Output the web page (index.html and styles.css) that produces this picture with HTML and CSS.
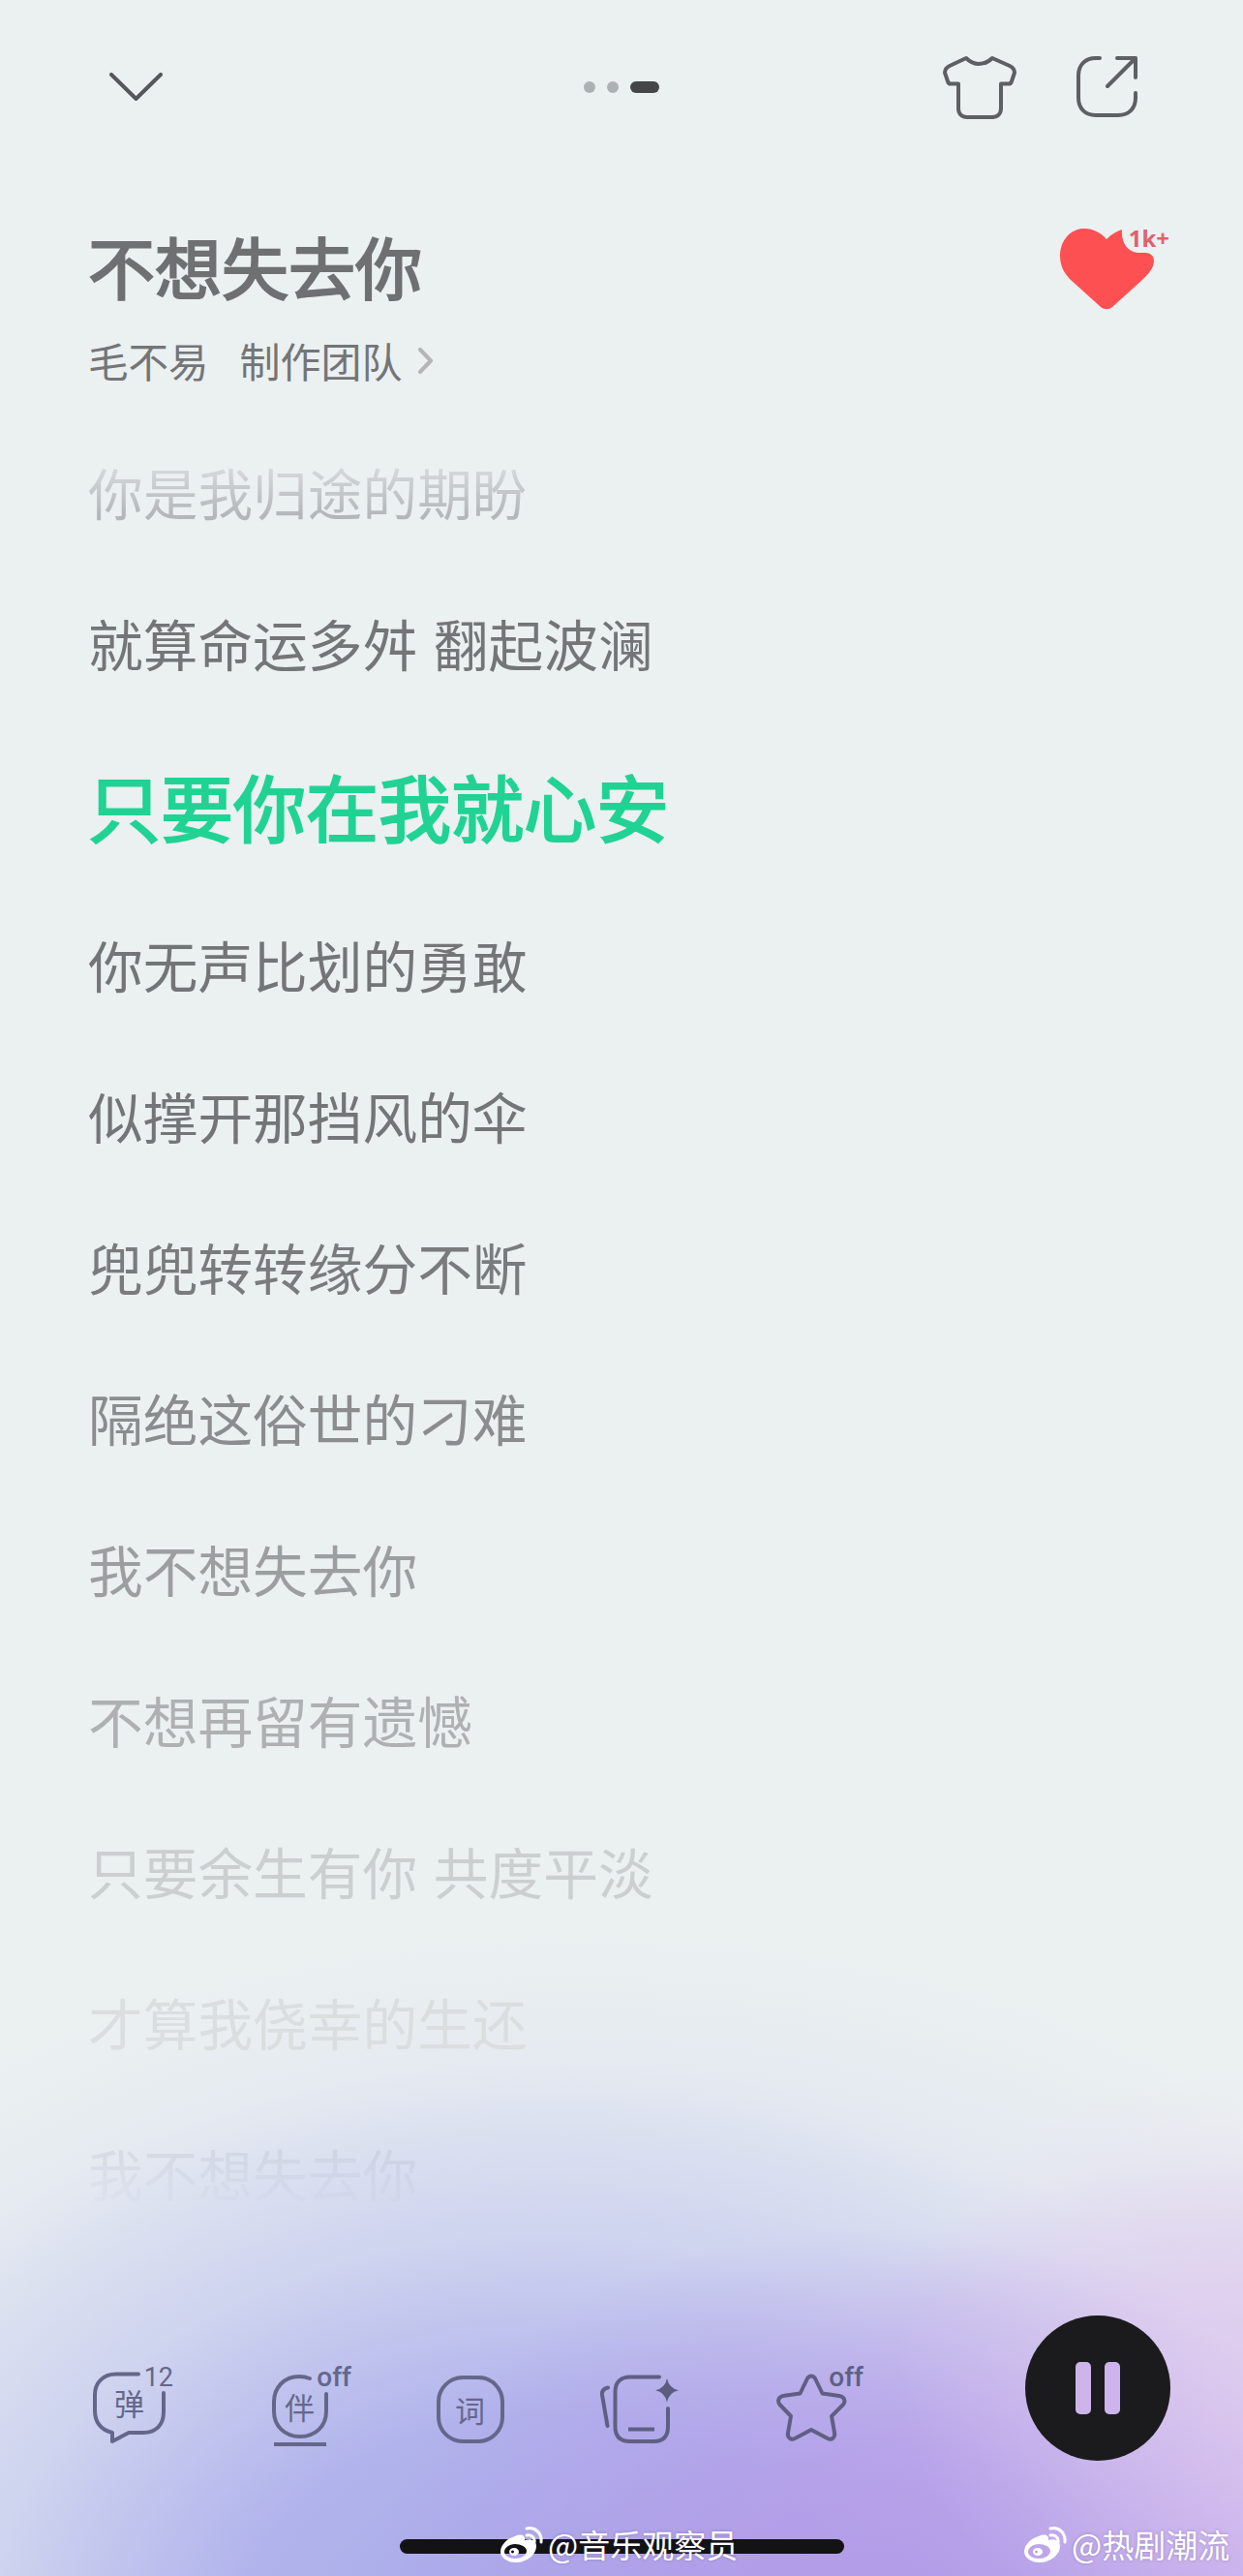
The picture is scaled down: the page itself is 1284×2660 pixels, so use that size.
FILE: index.html
```html
<!DOCTYPE html>
<html lang="zh-CN">
<head>
<meta charset="utf-8">
<title>不想失去你</title>
<link rel="stylesheet" href="styles.css">
</head>
<body>
<main class="page">
  <header class="topbar">
    <svg class="ic-down" viewBox="0 0 55 29"><path d="M2 2 L27.5 27 L53 2"/></svg>
    <div class="dots"><i class="dot"></i><i class="dot"></i><i class="pill"></i></div>
    <div class="top-actions">
      <svg class="ic-shirt" viewBox="0 0 76 66"><path d="M24 3 C28 7 32 9 37 9 C43 9 47 7 51 3 L69 11 C72 12.5 74 15 74 18 L71 27 C70.5 28.5 69.5 29.5 68 29.5 L60 29.5 L60 55 C60 60.5 56.5 64 51 64 L25 64 C19.5 64 16 60.5 16 55 L16 29.5 L8 29.5 C6.5 29.5 5.5 28.5 5 27 L2 18 C2 15 4 12.5 7 11 Z"/></svg>
      <svg class="ic-share" viewBox="0 0 63 63"><path d="M24 2 H20 C9 2 2 9 2 20 V43 C2 54 9 61 20 61 H43 C54 61 61 54 61 43 V38"/><path d="M32 31 L61 2 M42 2 H61 V22"/></svg>
    </div>
  </header>

  <section class="song">
    <div class="song-info">
      <h1 class="song-title">不想失去你</h1>
      <div class="song-meta">
        <span class="artist">毛不易</span>
        <span class="crew">制作团队</span>
        <svg class="ic-more" viewBox="0 0 16 27"><path d="M2 2 L13 13.5 L2 25"/></svg>
      </div>
    </div>
    <div class="like">
      <svg class="ic-heart" viewBox="0 0 97 84"><path d="M48 11 C42 4 34 0 25 0 C11 0 0 12 0 28 C0 38 4 46 11 53 L42 81 C46 84 50 84 54 81 L85 53 C91 47 97 41 97 33 C97 28 93 25 88 25 L80 25 C70 24 63 15 64 1 C58 3 53 6 48 11 Z"/></svg>
      <span class="like-count">1k+</span>
    </div>
  </section>

  <section class="lyrics">
    <p class="line l-past">你是我归途的期盼</p>
    <p class="line l-1">就算命运多舛 翻起波澜</p>
    <p class="line l-active">只要你在我就心安</p>
    <p class="line l-1">你无声比划的勇敢</p>
    <p class="line l-1">似撑开那挡风的伞</p>
    <p class="line l-2">兜兜转转缘分不断</p>
    <p class="line l-3">隔绝这俗世的刁难</p>
    <p class="line l-4">我不想失去你</p>
    <p class="line l-5">不想再留有遗憾</p>
    <p class="line l-6">只要余生有你 共度平淡</p>
    <p class="line l-7">才算我侥幸的生还</p>
    <p class="line l-8">我不想失去你</p>
  </section>

  <footer class="controls">
    <div class="tools">
      <div class="tool t-danmu">
        <svg class="ic-tool" viewBox="0 0 81 82"><path d="M47 7.5 H24 C11 7.5 2 16 2 29 V45 C2 57 8 65 20 68 V77 L37 68 H52 C65 68 73 60 73 47 V27"/></svg>
        <span class="glyph g-danmu">弹</span>
        <span class="sup">12</span>
      </div>
      <div class="tool t-accomp">
        <svg class="ic-tool" viewBox="0 0 82 82"><path d="M39 12 C35 10.5 32 10 28 10 C12 10 2 22 2 36 V46 C2 61 13 72 29 72 C45 72 56 61 56 46 V28"/><path class="ul" d="M2 80 H56"/></svg>
        <span class="glyph g-accomp">伴</span>
        <span class="sup">off</span>
      </div>
      <div class="tool t-words">
        <svg class="ic-tool" viewBox="0 0 70 82"><rect x="2" y="11" width="66" height="66" rx="25"/></svg>
        <span class="glyph g-words">词</span>
      </div>
      <div class="tool t-card">
        <svg class="ic-tool" viewBox="0 0 84 82"><path d="M61 10.5 H31 C21 10.5 15.5 16 15.5 26 V62 C15.5 72 21 77 31 77 H55 C65 77 70 72 70 62 V43"/><path d="M8 21.5 C3.5 22.5 1.5 25 2 29 L7.5 61"/><path class="ul" d="M29 64.5 H56"/><path class="spark" d="M69 12 Q71 22 81 24.3 Q71 26.5 69 36.5 Q67 26.5 57 24.3 Q67 22 69 12 Z"/></svg>
      </div>
      <div class="tool t-star">
        <svg class="ic-tool" viewBox="0 0 89 82"><path d="M31 12 C33 8.5 37 8.5 39 12 L46.5 27.5 L64 30 C69 31 71 35 68 39 L56 51 L59 68 C60 73 56 76 52 74 L35 65 L18 74 C14 76 10 73 11 68 L14 51 L2.5 39 C-0.5 35 1.5 31 6 30 L23.5 27.5 Z"/></svg>
        <span class="sup">off</span>
      </div>
    </div>
    <button class="pause" type="button" aria-label="暂停"><i class="bar"></i><i class="bar"></i></button>
  </footer>

  <div class="home-bar"></div>

  <div class="mark m-one">
    <svg class="ic-weibo" viewBox="0 0 44 38"><path fill-rule="evenodd" d="M15 11 C21 8 26 10 25 15 C31 13 37 15 37 21 C37 30 27 38 16 38 C7 38 0 33 0 27 C0 20 7 13 15 11 Z M15 19 C9 19 4 23 4 27 C4 31 9 34 15 34 C21 34 27 31 27 26 C27 22 21 19 15 19 Z M14 23 C17 23 19 25 19 27 C19 29 17 31 14 31 C11 31 9 29 9 27 C9 25 11 23 14 23 Z M12.500 25.500 A1.500 1.500 0 1 0 12.501 25.500 Z"/><path class="wave" d="M27 3 C35 1 43 7 42 17 M27 10 C31 9 36 12 35 17"/></svg>
    <span>@音乐观察员</span>
  </div>
  <div class="mark m-two">
    <svg class="ic-weibo" viewBox="0 0 44 38"><path fill-rule="evenodd" d="M15 11 C21 8 26 10 25 15 C31 13 37 15 37 21 C37 30 27 38 16 38 C7 38 0 33 0 27 C0 20 7 13 15 11 Z M15 19 C9 19 4 23 4 27 C4 31 9 34 15 34 C21 34 27 31 27 26 C27 22 21 19 15 19 Z M14 23 C17 23 19 25 19 27 C19 29 17 31 14 31 C11 31 9 29 9 27 C9 25 11 23 14 23 Z M12.500 25.500 A1.500 1.500 0 1 0 12.501 25.500 Z"/><path class="wave" d="M27 3 C35 1 43 7 42 17 M27 10 C31 9 36 12 35 17"/></svg>
    <span>@热剧潮流</span>
  </div>
</main>
</body>
</html>
```
FILE: styles.css
```css
* { box-sizing: border-box; }
html, body { margin: 0; padding: 0; }
body {
  font-family: "Noto Sans CJK SC", "Noto Sans", sans-serif;
  background: #ebf0f1;
}
.page {
  position: relative;
  width: 1284px;
  height: 2660px;
  overflow: hidden;
  display: flex;
  flex-direction: column;
  background-color: #ebf0f1;
  background-image:
    radial-gradient(ellipse 360px 300px at 1284px 2440px, rgba(226, 206, 238, .6), rgba(226, 206, 238, 0) 100%),
    radial-gradient(ellipse 520px 390px at 900px 2690px, rgba(178, 155, 232, 1) 0%, rgba(178, 155, 232, .75) 40%, rgba(178, 155, 232, 0) 100%),
    radial-gradient(ellipse 560px 480px at 1284px 2700px, rgba(208, 180, 238, 1) 0%, rgba(208, 180, 238, .6) 55%, rgba(208, 180, 238, 0) 100%),
    radial-gradient(ellipse 820px 590px at 560px 2720px, rgba(168, 170, 234, 1) 0%, rgba(170, 172, 235, .85) 38%, rgba(192, 198, 238, .5) 70%, rgba(225, 230, 243, 0) 100%),
    radial-gradient(ellipse 1050px 720px at 600px 2720px, rgba(208, 212, 240, .9) 0%, rgba(214, 218, 240, .6) 60%, rgba(235, 240, 241, 0) 100%);
}

.topbar {
  display: flex;
  align-items: flex-start;
  height: 123px;
  padding: 57px 109px 0 113px;
}
.topbar svg { fill: none; stroke-linecap: round; stroke-linejoin: round; }
.ic-down { width: 55px; height: 29px; margin-top: 18px; stroke: #55585a; stroke-width: 4; }
.dots { display: flex; gap: 12px; margin: 27px 0 0 435px; }
.dot { width: 12px; height: 12px; border-radius: 50%; background: #aeb1b3; }
.pill { width: 30px; height: 12px; border-radius: 6px; background: #444648; }
.top-actions { display: flex; gap: 62px; margin-left: auto; }
.ic-shirt { width: 76px; height: 66px; stroke: #5d5f62; stroke-width: 4; }
.ic-share { width: 63px; height: 63px; margin-top: 1px; stroke: #5d5f62; stroke-width: 4; }

.song {
  display: flex;
  justify-content: space-between;
  align-items: flex-start;
  margin-top: 111px;
  padding: 0 76px 0 91px;
}
.song-title {
  margin: 0;
  font-size: 69px;
  line-height: 80px;
  font-weight: 400;
  -webkit-text-stroke: 2.2px #6e7072;
  color: #6e7072;
}
.song-meta {
  display: flex;
  align-items: center;
  height: 50px;
  margin-top: 33px;
  font-size: 42px;
  line-height: 50px;
  color: #737577;
}
.artist { font-size: 41.5px; }
.crew { margin-left: 32px; }
.ic-more {
  width: 16px;
  height: 27px;
  margin-left: 16px;
  fill: none;
  stroke: #b3b5b6;
  stroke-width: 4;
  stroke-linecap: round;
  stroke-linejoin: round;
}
.like { position: relative; width: 112px; height: 84px; margin-top: 2px; margin-right: 1px; }
.ic-heart { display: block; width: 97px; height: 84px; fill: #fd5052; }
.like-count {
  position: absolute;
  top: -6px;
  right: -1px;
  font-family: "Noto Sans", sans-serif;
  font-size: 24px;
  line-height: 32px;
  font-weight: 700;
  color: #e0626a;
}

.lyrics { margin-top: 32px; }
.line {
  margin: 0;
  height: 156px;
  padding-left: 91px;
  font-size: 56.7px;
  line-height: 156px;
  word-spacing: 4px;
  white-space: nowrap;
}
.l-past {
  background-image: linear-gradient(#d8dbdd 33%, #b4b7b9 66%);
  -webkit-background-clip: text;
  background-clip: text;
  color: transparent;
}
.l-active {
  height: 176px;
  padding-top: 13px;
  padding-left: 91px;
  font-size: 75px;
  line-height: 156px;
  font-weight: 400;
  -webkit-text-stroke: 2.2px #20d394;
  color: #20d394;
}
.l-1 { color: #737577; }
.l-2 { color: #797b7d; }
.l-3 { color: #8a8c8e; }
.l-4 { color: #9c9ea0; }
.l-5 { color: #aeb0b2; }
.l-6 { color: #cbcfd0; }
.l-7 { color: #dadedf; }
.l-8 {
  background-image: linear-gradient(rgba(175, 182, 195, .3) 33%, rgba(175, 182, 200, .08) 66%);
  -webkit-background-clip: text;
  background-clip: text;
  color: transparent;
}

.controls {
  display: flex;
  align-items: flex-start;
  margin-top: auto;
  padding: 0 75px 119px 96px;
}
.tools { display: flex; margin-top: 53px; }
.tool { position: relative; height: 82px; color: #65678a; }
.ic-tool {
  display: block;
  width: 100%;
  height: 82px;
  overflow: visible;
  fill: none;
  stroke: #65678a;
  stroke-width: 4;
  stroke-linecap: round;
  stroke-linejoin: round;
}
.ic-tool .ul { stroke-linecap: butt; stroke-width: 4; }
.ic-tool .spark { fill: #5b5c7e; stroke: none; }
.t-danmu { width: 81px; }
.t-accomp { width: 82px; margin-left: 104px; }
.t-words { width: 70px; margin-left: 88px; }
.t-card { width: 84px; margin-left: 99px; }
.t-star { width: 89px; margin-left: 99px; }
.t-card .ic-tool, .t-star .ic-tool { stroke: #5f5f84; }
.t-star, .t-star .sup { color: #5f5f84; }

.glyph {
  position: absolute;
  font-size: 31px;
  line-height: 36px;
}
.g-danmu { left: 22px; top: 19px; }
.g-accomp { left: 13px; top: 23px; }
.g-words { left: 19px; top: 26px; }
.sup {
  position: absolute;
  top: -4px;
  right: 0;
  font-family: Roboto, sans-serif;
  font-size: 28px;
  line-height: 30px;
  font-weight: 500;
}
.t-danmu .sup { font-size: 27px; font-weight: 400; right: -2px; }

.pause {
  display: flex;
  align-items: center;
  justify-content: center;
  gap: 14px;
  width: 150px;
  height: 150px;
  margin-left: auto;
  padding: 0;
  border: 0;
  border-radius: 50%;
  background: #1b1b1d;
}
.bar { width: 16px; height: 54px; border-radius: 5px; background: #cdb4ea; }

.home-bar {
  position: absolute;
  left: 413px;
  top: 2622px;
  width: 459px;
  height: 15px;
  border-radius: 8px;
  background: #131316;
}
.mark {
  position: absolute;
  top: 2608px;
  display: flex;
  align-items: center;
  gap: 5px;
  height: 38px;
  font-size: 33px;
  line-height: 38px;
  color: #fff;
  text-shadow: 0 0 3px rgba(60, 50, 90, .35);
  white-space: nowrap;
}
.m-one { left: 517px; }
.m-two { left: 1058px; }
.ic-weibo { width: 44px; height: 38px; fill: #fff; flex: none; }
.ic-weibo .wave { fill: none; stroke: #fff; stroke-width: 3; stroke-linecap: round; }
```
